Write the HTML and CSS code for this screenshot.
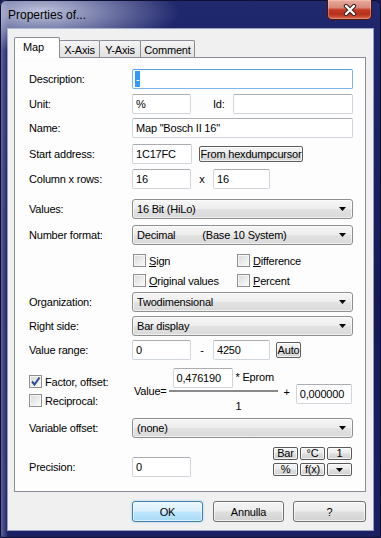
FILE: index.html
```html
<!DOCTYPE html>
<html>
<head>
<meta charset="utf-8">
<link rel="stylesheet" href="styles.css">
</head>
<body>
<div class="window">
  <div class="titlebar">
    <span class="title">Properties of...</span>
    <div class="close">
      <svg width="14" height="12" viewBox="0 0 14 12"><path d="M3 2 L11 10 M11 2 L3 10" stroke="#3b2020" stroke-width="4.4" stroke-linecap="round"/><path d="M3 2 L11 10 M11 2 L3 10" stroke="#ffffff" stroke-width="2.4" stroke-linecap="round"/></svg>
    </div>
  </div>
  <div class="client">
    <div class="tabs">
      <div class="tab sel t-map">Map</div>
      <div class="tab t-x">X-Axis</div>
      <div class="tab t-y">Y-Axis</div>
      <div class="tab t-c">Comment</div>
    </div>
    <div class="panel">
      <div class="row r-desc">
        <span class="lbl">Description:</span>
        <div class="field full focus"><span class="selected">-</span></div>
      </div>
      <div class="row r-unit">
        <span class="lbl">Unit:</span>
        <div class="field w59">%</div>
        <span class="id-lbl">Id:</span>
        <div class="field full"></div>
      </div>
      <div class="row r-name">
        <span class="lbl">Name:</span>
        <div class="field full">Map "Bosch II 16"</div>
      </div>
      <div class="row r-start">
        <span class="lbl">Start address:</span>
        <div class="field w60">1C17FC</div>
        <div class="btn small hex">From hexdumpcursor</div>
      </div>
      <div class="row r-col">
        <span class="lbl">Column x rows:</span>
        <div class="field w59">16</div>
        <span class="sep">x</span>
        <div class="field w57">16</div>
      </div>
      <div class="row r-values">
        <span class="lbl">Values:</span>
        <div class="combo"><span>16 Bit (HiLo)</span><svg class="arrow" width="7" height="4" viewBox="0 0 7 4"><path d="M0 0 H7 L3.5 4 Z" fill="#000"/></svg></div>
      </div>
      <div class="row r-num">
        <span class="lbl">Number format:</span>
        <div class="combo"><span>Decimal<span class="base">(Base 10 System)</span></span><svg class="arrow" width="7" height="4" viewBox="0 0 7 4"><path d="M0 0 H7 L3.5 4 Z" fill="#000"/></svg></div>
      </div>
      <div class="row chk-row r-sign">
        <span class="lbl"></span>
        <div class="chk first"><span class="cb"></span><span><u>S</u>ign</span></div>
        <div class="chk"><span class="cb"></span><span><u>D</u>ifference</span></div>
      </div>
      <div class="row chk-row r-orig">
        <span class="lbl"></span>
        <div class="chk first"><span class="cb"></span><span><u>O</u>riginal values</span></div>
        <div class="chk"><span class="cb"></span><span><u>P</u>ercent</span></div>
      </div>
      <div class="row r-org">
        <span class="lbl">Organization:</span>
        <div class="combo"><span>Twodimensional</span><svg class="arrow" width="7" height="4" viewBox="0 0 7 4"><path d="M0 0 H7 L3.5 4 Z" fill="#000"/></svg></div>
      </div>
      <div class="row r-right">
        <span class="lbl">Right side:</span>
        <div class="combo"><span>Bar display</span><svg class="arrow" width="7" height="4" viewBox="0 0 7 4"><path d="M0 0 H7 L3.5 4 Z" fill="#000"/></svg></div>
      </div>
      <div class="row r-range">
        <span class="lbl">Value range:</span>
        <div class="field w59">0</div>
        <span class="sep dash">-</span>
        <div class="field w57">4250</div>
        <div class="btn small auto">Auto</div>
      </div>
      <div class="factor">
        <div class="factor-left">
          <div class="chk fac"><span class="cb checked"><svg width="11" height="11" viewBox="0 0 11 11"><path d="M2 5.5 L4.5 8.5 L9.5 1.5" fill="none" stroke="#2b4f92" stroke-width="2"/></svg></span><span>Factor, offset:</span></div>
          <div class="chk rec"><span class="cb"></span><span>Reciprocal:</span></div>
        </div>
        <div class="formula">
          <span class="valeq">Value=</span>
          <div class="fraction">
            <div class="num">
              <div class="field w60">0,476190</div>
              <span class="eprom">* Eprom</span>
            </div>
            <div class="fline"></div>
            <div class="den">1</div>
          </div>
          <span class="plus">+</span>
          <div class="field w56 offs">0,000000</div>
        </div>
      </div>
      <div class="row r-var">
        <span class="lbl">Variable offset:</span>
        <div class="combo"><span>(none)</span><svg class="arrow" width="7" height="4" viewBox="0 0 7 4"><path d="M0 0 H7 L3.5 4 Z" fill="#000"/></svg></div>
      </div>
      <div class="prec">
        <div class="prec-row">
          <span class="lbl">Precision:</span>
          <div class="field w59">0</div>
        </div>
        <div class="units">
          <div class="btn tiny">Bar</div>
          <div class="btn tiny">°C</div>
          <div class="btn tiny">1</div>
          <div class="btn tiny">%</div>
          <div class="btn tiny">f(x)</div>
          <div class="btn tiny"><svg width="7" height="4" viewBox="0 0 7 4"><path d="M0 0 H7 L3.5 4 Z" fill="#000"/></svg></div>
        </div>
      </div>
    </div>
    <div class="buttons">
      <div class="btn big ok">OK</div>
      <div class="btn big annulla">Annulla</div>
      <div class="btn big help">?</div>
    </div>
  </div>
</div>
</body>
</html>
```

FILE: styles.css
```css
* { box-sizing: border-box; }
html, body { margin: 0; padding: 0; }
body {
  width: 381px;
  height: 538px;
  overflow: hidden;
  font-family: "Liberation Sans", Arial, sans-serif;
  font-size: 11px;
  letter-spacing: -0.2px;
  color: #000;
  background: #161b58;
}

.window {
  width: 381px;
  height: 538px;
  display: flex;
  flex-direction: column;
  padding: 0 8px 8px 8px;
  border-radius: 6px 6px 3px 3px;
  background:
    radial-gradient(140px 40px at 40px 12px, rgba(200,204,226,0.95), rgba(200,204,226,0)),
    linear-gradient(90deg, rgba(120,128,180,0.8) 0px, rgba(120,128,180,0) 8px),
    linear-gradient(180deg, #20286e 0%, #151a56 55%, #1a2062 100%);
  box-shadow: inset 0 0 0 1px #0c0f30;
}

.titlebar {
  height: 29px;
  flex: none;
  display: flex;
  align-items: flex-start;
}
.title {
  flex: 1;
  font-size: 12px;
  letter-spacing: 0;
  line-height: 15px;
  margin-top: 8px;
  color: #000;
}
.close {
  width: 45px;
  height: 20px;
  margin-right: 1px;
  display: flex;
  align-items: center;
  justify-content: center;
  border: 1px solid #4b1410;
  border-top: none;
  border-radius: 0 0 5px 5px;
  background: linear-gradient(180deg, #e7ab9c 0%, #d88a78 40%, #c23a26 52%, #b8301c 75%, #d86a4e 100%);
  box-shadow: inset 0 0 0 1px rgba(255,220,210,0.35);
}

.client {
  flex: 1;
  display: flex;
  flex-direction: column;
  background: #f0f0f0;
  padding: 8px 7px 8px 6px;
  box-shadow: 0 0 0 1px rgba(205,210,232,0.7);
}

.tabs {
  height: 20px;
  flex: none;
  display: flex;
  align-items: flex-end;
}
.tab {
  height: 17px;
  margin-left: -1px;
  border: 1px solid #898c95;
  border-bottom: none;
  border-radius: 2px 2px 0 0;
  background: linear-gradient(180deg, #f5f5f5 0%, #eaeaea 50%, #e2e2e2 100%);
  display: flex;
  align-items: center;
  justify-content: center;
  padding-top: 1px;
}
.tab.sel {
  height: 21px;
  margin-left: 0;
  margin-bottom: -1px;
  background: #ffffff;
  position: relative;
  z-index: 1;
  justify-content: flex-start;
  padding: 0 0 2px 8px;
}
.t-map { width: 46px; }
.t-x { width: 41px; }
.t-y { width: 42px; }
.t-c { width: 55px; }

.panel {
  height: 435px;
  flex: none;
  border: 1px solid #898c95;
  background: #fdfdfd;
  padding: 0 12px 0 14px;
  display: flex;
  flex-direction: column;
}

.row {
  display: flex;
  align-items: center;
  height: 20px;
  flex: none;
  white-space: nowrap;
}
.lbl {
  width: 103px;
  flex: none;
  white-space: nowrap;
}

.r-desc { margin-top: 11px; }
.r-unit { margin-top: 5px; }
.r-name { margin-top: 4px; }
.r-start { margin-top: 6px; }
.r-col { margin-top: 5px; }
.r-values { margin-top: 10px; }
.r-num { margin-top: 6px; }
.r-sign { margin-top: 9px; height: 13px; }
.r-orig { margin-top: 7px; height: 13px; }
.r-org { margin-top: 5px; }
.r-right { margin-top: 4px; }
.r-range { margin-top: 4px; }
.r-var { margin-top: 6px; }

.field {
  height: 20px;
  flex: none;
  border: 1px solid #d0d4db;
  border-top-color: #abadb3;
  border-radius: 2px;
  background: #ffffff;
  padding: 0 3px;
  display: flex;
  align-items: center;
  white-space: nowrap;
}
.field.full { flex: 1; }
.field.focus {
  border-color: #7eb4ea;
  border-top-color: #569de5;
}
.selected {
  background: #3399ff;
  color: #fff;
  line-height: 16px;
  padding: 0 1px;
  margin-left: -1px;
}
.w56 { width: 56px; }
.w57 { width: 57px; }
.w59 { width: 59px; }
.w60 { width: 60px; }

.id-lbl {
  width: 42px;
  flex: none;
  padding-left: 22px;
}
.sep {
  width: 22px;
  flex: none;
  text-align: center;
}

.btn {
  border: 1px solid #707070;
  border-radius: 3px;
  background: linear-gradient(180deg, #f4f4f4 0%, #ececec 48%, #dedede 52%, #d2d2d2 100%);
  box-shadow: inset 0 0 0 1px rgba(255,255,255,0.7);
  display: flex;
  align-items: center;
  justify-content: center;
  white-space: nowrap;
  flex: none;
}
.btn.small {
  height: 16px;
  border-radius: 2px;
  border-color: #5f5f5f;
}
.hex { width: 104px; margin-left: 7px; }
.auto { width: 25px; margin-left: 6px; height: 16px; }

.combo {
  flex: 1;
  height: 20px;
  border: 1px solid #8e8f8f;
  border-radius: 3px;
  background: linear-gradient(180deg, #f6f6f6 0%, #ededed 48%, #e2e2e2 52%, #d9d9d9 100%);
  box-shadow: inset 0 0 0 1px rgba(255,255,255,0.6);
  display: flex;
  align-items: center;
  justify-content: space-between;
  padding: 0 6px 0 4px;
  white-space: nowrap;
}
.base { margin-left: 27px; }
.arrow { flex: none; }

.chk {
  display: flex;
  align-items: center;
  gap: 3px;
  white-space: nowrap;
}
.chk.first { width: 105px; padding-left: 1px; flex: none; }
.cb {
  width: 13px;
  height: 13px;
  flex: none;
  border: 1px solid #8f8f8f;
  background: linear-gradient(135deg, #d6d8db 0%, #eeeeee 60%, #fafafa 100%);
  box-shadow: inset 0 0 0 1px #f6f6f6;
  display: flex;
  align-items: center;
  justify-content: center;
}

.factor {
  margin-top: 8px;
  height: 44px;
  flex: none;
  display: flex;
}
.factor-left {
  width: 103px;
  flex: none;
  display: flex;
  flex-direction: column;
}
.chk.fac { margin-top: 7px; }
.chk.rec { margin-top: 6px; }
.formula {
  display: flex;
  align-items: flex-start;
}
.valeq {
  margin-left: 2px;
  margin-top: 17px;
  line-height: 13px;
}
.fraction {
  width: 109px;
  margin-left: 2px;
  display: flex;
  flex-direction: column;
  flex: none;
}
.num {
  display: flex;
  align-items: flex-start;
  padding-left: 4px;
}
.eprom {
  margin-left: 3px;
  margin-top: 3px;
  line-height: 13px;
}
.fline {
  height: 2px;
  margin-top: 2px;
  background: #8a8a8a;
}
.den {
  padding-left: 67px;
  margin-top: 8px;
  line-height: 13px;
}
.plus {
  margin-left: 6px;
  margin-top: 18px;
  line-height: 13px;
}
.offs {
  margin-left: 6px;
  margin-top: 16px;
}

.prec {
  margin-top: 9px;
  height: 30px;
  flex: none;
  display: flex;
  align-items: flex-start;
}
.prec-row {
  display: flex;
  align-items: center;
  margin-top: 10px;
}
.units {
  margin-left: auto;
  margin-right: 1px;
  display: grid;
  grid-template-columns: 25px 25px 25px;
  grid-template-rows: 13px 13px;
  column-gap: 2px;
  row-gap: 3px;
}
.btn.tiny {
  height: 13px;
  border-radius: 2px;
  border-color: #5a5a5a;
  font-size: 11px;
  line-height: 11px;
}

.buttons {
  margin-top: 9px;
  height: 21px;
  flex: none;
  display: flex;
  justify-content: flex-end;
}
.btn.big { height: 21px; }
.ok {
  width: 71px;
  border-color: #3c7fb1;
  background: linear-gradient(180deg, #eaf6fd 0%, #d9f0fc 48%, #bee6fd 52%, #a7d9f5 100%);
  box-shadow: inset 0 0 0 1px rgba(255,255,255,0.6), 0 0 2px rgba(80,170,230,0.6);
}
.annulla { width: 71px; margin-left: 10px; }
.help { width: 73px; margin-left: 9px; }
```
